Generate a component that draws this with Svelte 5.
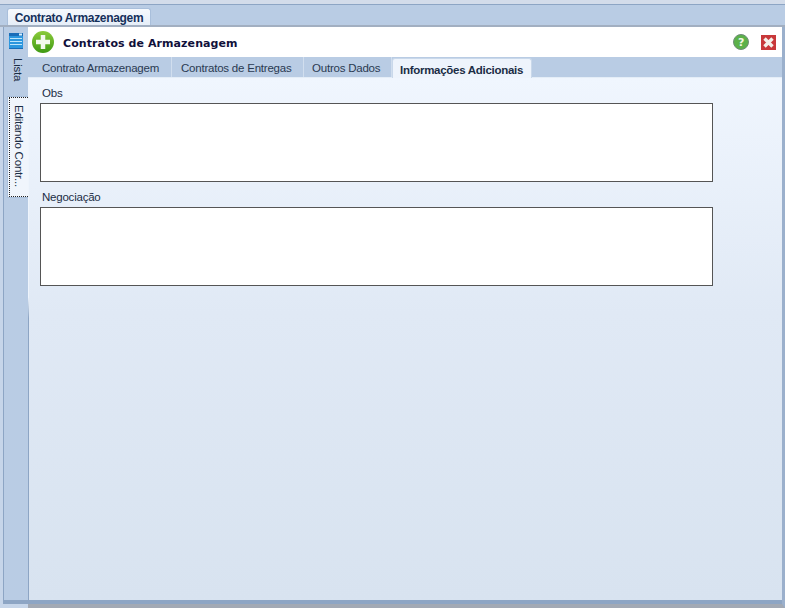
<script lang="ts">
    const tabs = ["Contrato Armazenagem", "Contratos de Entregas", "Outros Dados", "Informações Adicionais"];
    let active = $state(3);
    const fields = ["Obs", "Negociação"];
</script>

<div class="window">
    <div class="doc-strip">
        <div class="doc-tab">Contrato Armazenagem</div>
    </div>
    <div class="frame">
        <aside class="side">
            <svg class="list-icon" width="14" height="16" viewBox="0 0 14 16">
                <rect width="14" height="16" fill="#2d97de"/>
                <rect width="14" height="3" fill="#1a6db8"/>
                <rect x="10" y="0.5" width="3" height="2" fill="#d9f1ff"/>
                <path d="M1 5.5h12M1 8.5h12M1 11.5h12" stroke="#bfe6fb" stroke-width="1"/>
                <path d="M0 15.5h14" stroke="#1a6db8"/>
            </svg>
            <div class="side-tab">Lista</div>
            <div class="side-tab current"><span>Editando Contr...</span></div>
        </aside>
        <main class="main">
            <header class="head">
                <svg width="22" height="22" viewBox="0 0 22 22">
                    <defs>
                        <linearGradient id="plus" x1="0" y1="0" x2="0" y2="1">
                            <stop offset="0" stop-color="#8ccb3a"/>
                            <stop offset="1" stop-color="#3f9a14"/>
                        </linearGradient>
                    </defs>
                    <circle cx="11" cy="11" r="11" fill="url(#plus)"/>
                    <path d="M11 4v14M4 11h14" stroke="#f4f9ee" stroke-width="4.5"/>
                </svg>
                <h1>Contratos de Armazenagem</h1>
                <div class="head-actions">
                    <svg width="16" height="16" viewBox="0 0 16 16">
                        <circle cx="8" cy="8" r="7.5" fill="#5cb14a" stroke="#6f8c78"/>
                        <text x="8" y="12" text-anchor="middle" class="q">?</text>
                    </svg>
                    <svg width="15" height="15" viewBox="0 0 15 15">
                        <rect width="15" height="15" fill="#c8383a"/>
                        <path d="M3.5 3.5l8 8M11.5 3.5l-8 8" stroke="#f4f0ea" stroke-width="3.4"/>
                    </svg>
                </div>
            </header>
            <nav class="tabs">
                {#each tabs as tab, i}
                    <button class="tab" class:active={i === active} onclick={() => (active = i)}>{tab}</button>
                {/each}
            </nav>
            <section class="content">
                {#each fields as field}
                    <label class="field">
                        <span>{field}</span>
                        <textarea></textarea>
                    </label>
                {/each}
            </section>
        </main>
    </div>
</div>

<style>
    :global(body) {
        margin: 0;
        background: #b9cce4;
    }
    .window {
        width: 785px;
        height: 608px;
        box-sizing: border-box;
        display: flex;
        flex-direction: column;
        overflow: hidden;
        font-family: "Liberation Sans", Arial, sans-serif;
        font-size: 11.5px;
        letter-spacing: -0.22px;
        color: #1b2d45;
        background: #b9cce4;
        border-top: 4px solid #d3dcea;
    }
    .doc-strip {
        height: 21px;
        box-sizing: border-box;
        border-top: 1px solid #8da5c4;
        padding: 3px 0 0 7px;
        display: flex;
    }
    .doc-tab {
        width: 144px;
        height: 18px;
        box-sizing: border-box;
        text-align: center;
        line-height: 18px;
        font-size: 12px;
        font-weight: bold;
        letter-spacing: -0.32px;
        color: #15305a;
        background: linear-gradient(#f6f9fd, #e4edf8);
        border: 1px solid #a9bfdb;
        border-bottom: 0;
        border-radius: 3px 3px 0 0;
    }
    .frame {
        flex: 1;
        display: flex;
        min-height: 0;
        border-top: 2px solid #a2afc1;
        background: #c6d5e9;
    }
    .side {
        width: 25px;
        margin-left: 3px;
        margin-bottom: 4px;
        box-sizing: border-box;
        display: flex;
        flex-direction: column;
        align-items: flex-end;
        background: #b9cce4;
        border-left: 1px solid #8da5c4;
        border-bottom: 4px solid #8da5c4;
        padding-top: 6px;
    }
    .list-icon {
        margin: 0 5px 5px 0;
    }
    .side-tab {
        writing-mode: vertical-rl;
        height: 42px;
        width: 21px;
        line-height: 20px;
        padding-top: 4px;
        box-sizing: border-box;
        color: #1b2d45;
    }
    .side-tab.current {
        height: 102px;
        line-height: 19px;
        padding-top: 0;
        background: #f0f5fc;
        border: 1px solid #a9bfdb;
        border-right: 0;
        display: flex;
        align-items: center;
    }
    .side-tab.current span {
        border: 1px dotted #222;
        border-right: 0;
        height: 100px;
        width: 19px;
        box-sizing: border-box;
        padding-top: 7px;
        white-space: nowrap;
    }
    .main {
        flex: 1;
        min-width: 0;
        display: flex;
        flex-direction: column;
        background: #b9cce4;
        border-right: 3px solid #9bb0cc;
        border-bottom: 4px solid #a2a9b4;
    }
    .head {
        height: 30px;
        flex: none;
        background: #fff;
        display: flex;
        align-items: center;
        padding-left: 4px;
    }
    h1 {
        margin: 2px 0 0 9px;
        font-family: "DejaVu Sans", Verdana, sans-serif;
        font-size: 11px;
        font-weight: bold;
        letter-spacing: 0.08px;
        color: #10103a;
    }
    .head-actions {
        margin-left: auto;
        display: flex;
        align-items: center;
        gap: 12px;
        padding-right: 6px;
    }
    .q {
        font: bold 11px "DejaVu Sans", sans-serif;
        fill: #f2f7e8;
    }
    .tabs {
        height: 21px;
        flex: none;
        box-sizing: border-box;
        display: flex;
        padding-left: 3px;
        border-bottom: 1px solid #e4edf7;
    }
    .tab {
        all: unset;
        width: 141px;
        height: 20px;
        box-sizing: border-box;
        padding: 3px 0 0 11px;
        font: inherit;
        line-height: 15px;
        color: #2a3a52;
        border-right: 1px solid #d1deee;
    }
    .tab:nth-child(2) {
        width: 132px;
        padding-left: 9px;
    }
    .tab:nth-child(3) {
        width: 88px;
        padding-left: 8px;
    }
    .tab.active {
        width: 140px;
        height: 21px;
        margin-top: 1px;
        margin-bottom: -1px;
        padding: 3px 0 0 7px;
        font-weight: bold;
        letter-spacing: -0.28px;
        color: #1b2d45;
        background: #eef4fc;
        border: 1px solid #c9d8ea;
        border-bottom: 0;
        border-radius: 3px 3px 0 0;
    }
    .content {
        flex: 1;
        background: linear-gradient(#f0f6fe, #e0e9f5 45%, #d8e3f0);
        border-left: 1px solid;
        border-image: linear-gradient(#eef4fc 42%, #8da5c4 46%) 1;
        border-bottom: 4px solid #8da5c4;
        padding: 0 0 0 11px;
        display: flex;
        flex-direction: column;
    }
    .field {
        display: flex;
        flex-direction: column;
        width: 673px;
    }
    .field span {
        height: 25px;
        box-sizing: border-box;
        padding: 8px 0 0 2px;
        line-height: 15px;
        color: #1b2d45;
    }
    textarea {
        all: unset;
        display: block;
        height: 79px;
        box-sizing: border-box;
        background: #fff;
        border: 1px solid #555;
    }
</style>
